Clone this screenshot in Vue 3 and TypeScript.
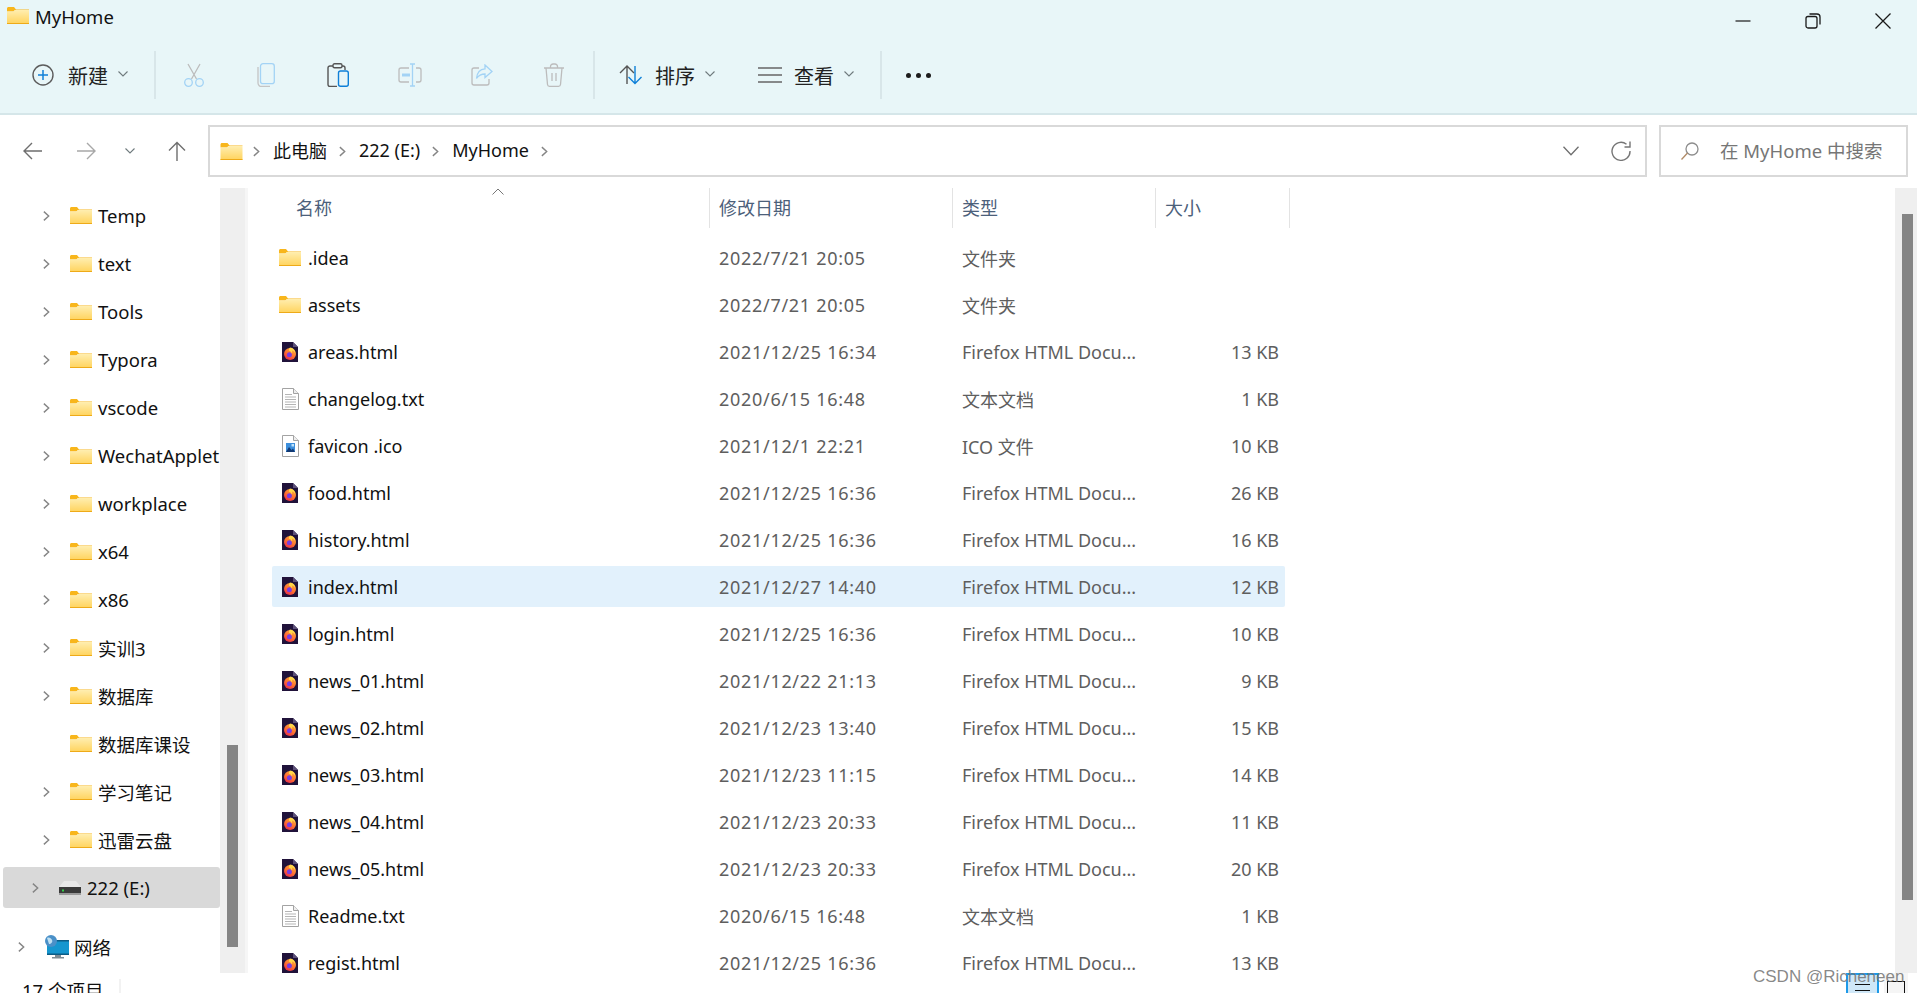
<script setup lang="ts">
interface TreeItem {
  name: string;
  noChevron?: boolean;
}

interface FileRow {
  name: string;
  date: string;
  type: string;
  size: string;
  icon: 'folder' | 'firefox' | 'text' | 'image';
  active?: boolean;
}

const FF = 'Firefox HTML Docu...';

const tree: TreeItem[] = [
  { name: 'Temp' },
  { name: 'text' },
  { name: 'Tools' },
  { name: 'Typora' },
  { name: 'vscode' },
  { name: 'WechatApplet' },
  { name: 'workplace' },
  { name: 'x64' },
  { name: 'x86' },
  { name: '实训3' },
  { name: '数据库' },
  { name: '数据库课设', noChevron: true },
  { name: '学习笔记' },
  { name: '迅雷云盘' },
];

const files: FileRow[] = [
  { name: '.idea', date: '2022/7/21 20:05', type: '文件夹', size: '', icon: 'folder' },
  { name: 'assets', date: '2022/7/21 20:05', type: '文件夹', size: '', icon: 'folder' },
  { name: 'areas.html', date: '2021/12/25 16:34', type: FF, size: '13 KB', icon: 'firefox' },
  { name: 'changelog.txt', date: '2020/6/15 16:48', type: '文本文档', size: '1 KB', icon: 'text' },
  { name: 'favicon .ico', date: '2021/12/1 22:21', type: 'ICO 文件', size: '10 KB', icon: 'image' },
  { name: 'food.html', date: '2021/12/25 16:36', type: FF, size: '26 KB', icon: 'firefox' },
  { name: 'history.html', date: '2021/12/25 16:36', type: FF, size: '16 KB', icon: 'firefox' },
  { name: 'index.html', date: '2021/12/27 14:40', type: FF, size: '12 KB', icon: 'firefox', active: true },
  { name: 'login.html', date: '2021/12/25 16:36', type: FF, size: '10 KB', icon: 'firefox' },
  { name: 'news_01.html', date: '2021/12/22 21:13', type: FF, size: '9 KB', icon: 'firefox' },
  { name: 'news_02.html', date: '2021/12/23 13:40', type: FF, size: '15 KB', icon: 'firefox' },
  { name: 'news_03.html', date: '2021/12/23 11:15', type: FF, size: '14 KB', icon: 'firefox' },
  { name: 'news_04.html', date: '2021/12/23 20:33', type: FF, size: '11 KB', icon: 'firefox' },
  { name: 'news_05.html', date: '2021/12/23 20:33', type: FF, size: '20 KB', icon: 'firefox' },
  { name: 'Readme.txt', date: '2020/6/15 16:48', type: '文本文档', size: '1 KB', icon: 'text' },
  { name: 'regist.html', date: '2021/12/25 16:36', type: FF, size: '13 KB', icon: 'firefox' },
];
</script>

<template>
  <div class="window">
    <svg class="defs" width="0" height="0" aria-hidden="true">
      <defs>
        <linearGradient id="folderFill" x1="0" y1="0" x2="0" y2="1">
          <stop offset="0" stop-color="#ffeeb0" />
          <stop offset="1" stop-color="#ffd35c" />
        </linearGradient>
        <linearGradient id="foxFill" x1="0.8" y1="0" x2="0.2" y2="1">
          <stop offset="0" stop-color="#ffb23a" />
          <stop offset="0.55" stop-color="#ff6f30" />
          <stop offset="1" stop-color="#e6254e" />
        </linearGradient>
        <symbol id="folder" viewBox="0 0 22 17">
          <path d="M0 1.5C0 .7.7 0 1.5 0H7l2 2.5h13V3H8L6.5 4.5H0z" fill="#f8b61c" />
          <path d="M0 4.5h6.5L8 3h14v14H0z" fill="url(#folderFill)" />
          <rect x="0" y="16" width="22" height="1" fill="#eeaa18" />
        </symbol>
        <symbol id="firefox" viewBox="0 0 16 20">
          <path d="M0 0h11l5 5v15H0z" fill="#20123a" />
          <path d="M11 0l5 5h-5z" fill="#5c5078" />
          <circle cx="8" cy="12" r="6" fill="url(#foxFill)" />
          <circle cx="7.4" cy="12.8" r="2.5" fill="#7b3ce0" />
          <path d="M8 5.5c3 .3 5.2 2.6 5.2 5.6-.8-1.6-2-2.5-3.6-2.7 1 .9.9 2.2.2 3-.2-1.4-1.4-2.5-2.8-2.7C6.8 7.8 7 6.5 8 5.5z" fill="#ffd84a" />
        </symbol>
        <symbol id="text" viewBox="0 0 17 22">
          <path d="M.5.5h11l5 5v16H.5z" fill="#fff" stroke="#a3a3a3" />
          <path d="M11.5.5v5h5" fill="#eee" stroke="#a3a3a3" />
          <path d="M3 6.5h7M3 9h11M3 11.5h11M3 14h11M3 16.5h11M3 19h11" stroke="#b5b5b5" />
        </symbol>
        <symbol id="image" viewBox="0 0 17 22">
          <path d="M.5.5h11l5 5v16H.5z" fill="#fff" stroke="#a3a3a3" />
          <path d="M11.5.5v5h5" fill="#eee" stroke="#a3a3a3" />
          <rect x="4" y="8" width="9" height="9" fill="#3d8fdc" />
          <path d="M4 17l3-5 2.5 3 1.5-1.5 2 3.5z" fill="#123a74" />
          <rect x="9.5" y="9" width="2.5" height="2.5" fill="#bfe3fb" />
        </symbol>
        <symbol id="chev" viewBox="0 0 8 12">
          <path d="M1 1l5.500 5L1 11" fill="none" stroke="#858585" stroke-width="1.600" />
        </symbol>
        <symbol id="down" viewBox="0 0 10 6">
          <path d="M.5.5L5 5 9.5.5" fill="none" stroke="#6f7a7d" stroke-width="1.100" />
        </symbol>
      </defs>
    </svg>

    <header class="chrome">
      <div class="titlebar">
        <svg class="title-icon" width="22" height="17"><use href="#folder" /></svg>
        <span class="title-text">MyHome</span>
        <div class="win-buttons">
          <svg width="16" height="16" viewBox="0 0 16 16"><path d="M.5 8h15" stroke="#1a1a1a" stroke-width="1.200" /></svg>
          <svg width="16" height="16" viewBox="0 0 16 16" fill="none" stroke="#1a1a1a" stroke-width="1.300">
            <rect x="1" y="3.5" width="11" height="11.5" rx="2" />
            <path d="M4.5 1h7.5a3 3 0 0 1 3 3v7.5" />
          </svg>
          <svg width="16" height="16" viewBox="0 0 16 16"><path d="M.5.5l15 15M15.5.5l-15 15" stroke="#1a1a1a" stroke-width="1.300" /></svg>
        </div>
      </div>
      <div class="toolbar">
        <div class="tool tool-new">
          <svg width="22" height="22" viewBox="0 0 22 22">
            <circle cx="11" cy="11" r="10" fill="none" stroke="#5c5c5c" stroke-width="1.400" />
            <path d="M11 6v10M6 11h10" stroke="#0f80d8" stroke-width="1.500" />
          </svg>
          <span class="tool-label">新建</span>
          <svg class="caret" width="10" height="6"><use href="#down" /></svg>
        </div>
        <span class="sep"></span>
        <div class="icon-tool">
          <svg width="22" height="24" viewBox="0 0 22 24" fill="none" stroke-width="1.300">
            <path d="M5 1l8.500 15M17 1L8.500 16" stroke="#bcbcbc" />
            <circle cx="5.5" cy="19.5" r="3.8" stroke="#a3d3f5" />
            <circle cx="16.5" cy="19.5" r="3.8" stroke="#a3d3f5" />
          </svg>
        </div>
        <div class="icon-tool">
          <svg width="18" height="24" viewBox="0 0 18 24" fill="none" stroke-width="1.300">
            <path d="M1 4v16a3.500 3.500 0 0 0 3.500 3.500H13" stroke="#c4c4c4" />
            <rect x="3.5" y=".7" width="13.8" height="20" rx="2.5" stroke="#a3d3f5" />
          </svg>
        </div>
        <div class="icon-tool">
          <svg width="22" height="24" viewBox="0 0 22 24" fill="none" stroke-width="1.400">
            <path d="M6 3H3a2 2 0 0 0-2 2v16.500a2 2 0 0 0 2 2h7M15 3h1a2 2 0 0 1 2 2v2" stroke="#555" />
            <rect x="6" y=".8" width="9" height="4" rx="1.5" stroke="#555" />
            <rect x="11.5" y="8" width="9.8" height="15.3" rx="2" stroke="#0f80d8" />
          </svg>
        </div>
        <div class="icon-tool">
          <svg width="24" height="24" viewBox="0 0 24 24" fill="none" stroke-width="1.300">
            <path d="M11 5H3a2 2 0 0 0-2 2v10a2 2 0 0 0 2 2h8M18 5h3a2 2 0 0 1 2 2v10a2 2 0 0 1-2 2h-3" stroke="#bcbcbc" />
            <path d="M14.500 1v22M12 1h5M12 23h5" stroke="#a3d3f5" />
            <rect x="4" y="10.5" width="8" height="3" fill="#a3d3f5" stroke="none" />
          </svg>
        </div>
        <div class="icon-tool">
          <svg width="22" height="22" viewBox="0 0 22 22" fill="none" stroke-width="1.300">
            <path d="M8 4H3a2 2 0 0 0-2 2v13a2 2 0 0 0 2 2h13a2 2 0 0 0 2-2v-4" stroke="#bcbcbc" />
            <path d="M14 1l7 6.500-7 6V10c-4 0-6.500 1.500-8.500 4.500C6 9 9 5 14 4.800z" stroke="#a3d3f5" />
          </svg>
        </div>
        <div class="icon-tool">
          <svg width="22" height="24" viewBox="0 0 22 24" fill="none" stroke="#bcbcbc" stroke-width="1.300">
            <path d="M1 5h20M7.500 5V3.500A2.500 2.500 0 0 1 10 1h2a2.500 2.500 0 0 1 2.500 2.500V5" />
            <path d="M3 5l1.500 16.500a2 2 0 0 0 2 1.800h9a2 2 0 0 0 2-1.800L19 5" />
            <path d="M9 10v8M13 10v8" />
          </svg>
        </div>
        <span class="sep sep-b"></span>
        <div class="tool tool-sort">
          <svg width="24" height="20" viewBox="0 0 24 20" fill="none" stroke-width="1.400">
            <path d="M8 19V1.500M1 8l7-7 7 7" stroke="#555" />
            <path d="M16 1v17.500M9.500 12l6.500 6.500 6.500-6.500" stroke="#0f80d8" />
          </svg>
          <span class="tool-label">排序</span>
          <svg class="caret" width="10" height="6"><use href="#down" /></svg>
        </div>
        <div class="tool tool-view">
          <svg width="24" height="18" viewBox="0 0 24 18" stroke="#666" stroke-width="1.500">
            <path d="M0 2h24M0 9h24M0 16h24" />
          </svg>
          <span class="tool-label">查看</span>
          <svg class="caret" width="10" height="6"><use href="#down" /></svg>
        </div>
        <span class="sep sep-c"></span>
        <div class="dots"><i></i><i></i><i></i></div>
      </div>
    </header>

    <div class="navrow">
      <div class="nav-buttons">
        <svg width="20" height="20" viewBox="0 0 20 20" fill="none" stroke="#6e6e6e" stroke-width="1.400"><path d="M19 10H1.500M9 2l-8 8 8 8" /></svg>
        <svg width="20" height="20" viewBox="0 0 20 20" fill="none" stroke="#a8a8a8" stroke-width="1.400"><path d="M1 10h17.500M11 2l8 8-8 8" /></svg>
        <svg width="10" height="6"><use href="#down" /></svg>
        <svg width="20" height="20" viewBox="0 0 20 20" fill="none" stroke="#6e6e6e" stroke-width="1.400"><path d="M10 20V1.500M2 9.500l8-8 8 8" /></svg>
      </div>
      <div class="address">
        <svg width="23" height="17"><use href="#folder" /></svg>
        <svg class="crumb-sep first" width="7" height="11"><use href="#chev" /></svg>
        <span class="crumb">此电脑</span>
        <svg class="crumb-sep" width="7" height="11"><use href="#chev" /></svg>
        <span class="crumb">222 (E:)</span>
        <svg class="crumb-sep" width="7" height="11"><use href="#chev" /></svg>
        <span class="crumb">MyHome</span>
        <svg class="crumb-sep" width="7" height="11"><use href="#chev" /></svg>
        <svg class="addr-down" width="16" height="10" viewBox="0 0 16 10" fill="none" stroke="#6e6e6e" stroke-width="1.300"><path d="M.5.8L8 8.800l7.500-8" /></svg>
        <svg class="refresh" width="20" height="20" viewBox="0 0 20 20" fill="none" stroke="#757575" stroke-width="1.400">
          <path d="M15.500 3.200A9 9 0 1 0 19 10" />
          <path d="M19 .5v5.500h-5.500" />
        </svg>
      </div>
      <div class="search">
        <svg width="18" height="18" viewBox="0 0 18 18" fill="none" stroke-width="1.300">
          <circle cx="11" cy="7" r="6" stroke="#8d8d8d" />
          <path d="M6.500 11L.5 17.500" stroke="#b08a66" />
        </svg>
        <span>在 MyHome 中搜索</span>
      </div>
    </div>

    <div class="body">
      <aside class="sidebar">
        <div class="tree">
          <div v-for="item in tree" :key="item.name" class="tree-row">
            <svg class="chev" :class="{ hidden: item.noChevron }" width="7" height="12"><use href="#chev" /></svg>
            <svg class="tree-icon" width="22" height="17"><use href="#folder" /></svg>
            <span>{{ item.name }}</span>
          </div>
          <div class="tree-row drive">
            <svg class="chev" width="7" height="12"><use href="#chev" /></svg>
            <svg class="tree-icon" width="22" height="14" viewBox="0 0 22 14">
              <path d="M5 0h12l5 6H0z" fill="#e8e8e8" />
              <rect y="6" width="22" height="7" fill="#3a3a3a" />
              <rect y="12" width="22" height="2" fill="#9a9a9a" />
              <rect x="3" y="8.5" width="2" height="2" fill="#35d04a" />
            </svg>
            <span>222 (E:)</span>
          </div>
          <div class="tree-row network">
            <svg class="chev" width="7" height="12"><use href="#chev" /></svg>
            <svg class="tree-icon" width="24" height="24" viewBox="0 0 24 24">
              <rect x="2" y="5" width="22" height="15" fill="#1596cf" />
              <rect x="2" y="5" width="22" height="1.5" fill="#0c5c86" />
              <rect x="2" y="18.5" width="22" height="1.5" fill="#0c5c86" />
              <path d="M10 20h6v2h3v1.500H7V22h3z" fill="#7f8c94" />
              <circle cx="6" cy="6" r="6" fill="#4a90c8" />
              <path d="M2 3c2-1 4 0 5 2s-1 4-3 4z" fill="#bfe0f2" />
            </svg>
            <span>网络</span>
          </div>
        </div>
        <div class="side-scroll"><div class="side-thumb"></div></div>
      </aside>

      <main class="content">
        <div class="list">
          <div class="list-head">
            <div class="head-cell head-name">
              名称
              <svg class="sort-caret" width="12" height="7" viewBox="0 0 12 7" fill="none" stroke="#777"><path d="M.5 6.500L6 1l5.500 5.500" /></svg>
            </div>
            <div class="head-cell">修改日期</div>
            <div class="head-cell">类型</div>
            <div class="head-cell">大小</div>
          </div>
          <div v-for="f in files" :key="f.name" class="file-row" :class="{ active: f.active }">
            <div class="file-name">
              <span class="file-icon">
                <svg v-if="f.icon === 'folder'" width="22" height="17"><use href="#folder" /></svg>
                <svg v-else-if="f.icon === 'firefox'" width="16" height="20"><use href="#firefox" /></svg>
                <svg v-else-if="f.icon === 'text'" width="17" height="22"><use href="#text" /></svg>
                <svg v-else width="17" height="22"><use href="#image" /></svg>
              </span>
              <span>{{ f.name }}</span>
            </div>
            <div class="file-date">{{ f.date }}</div>
            <div class="file-type">{{ f.type }}</div>
            <div class="file-size">{{ f.size }}</div>
          </div>
        </div>
        <div class="main-scroll"><div class="main-thumb"></div></div>
      </main>
    </div>

    <footer class="status">
      <span class="count">17 个项目</span>
      <div class="view-btns">
        <div class="view-btn on"><i></i><i></i></div>
        <div class="view-btn alt"><b></b></div>
      </div>
    </footer>

    <div class="watermark">CSDN @Richeneen</div>
  </div>
</template>

<style>
html,
body {
  margin: 0;
  background: #fff;
  overflow: hidden;
}
</style>

<style scoped>
.window {
  position: relative;
  width: 1917px;
  height: 993px;
  display: flex;
  flex-direction: column;
  overflow: hidden;
  background: #fff;
  color: #111;
  font-family: "Noto Sans", "Noto Sans CJK SC", sans-serif;
  font-size: 18px;
}

.defs {
  position: absolute;
}

svg {
  display: block;
  flex: none;
}

/* top band */
.chrome {
  height: 113px;
  flex: none;
  background: #e8f6f8;
  border-bottom: 2px solid #d5e6e9;
}

.titlebar {
  height: 51px;
  display: flex;
  align-items: flex-start;
}

.title-icon {
  margin: 7px 0 0 7px;
}

.title-text {
  margin: 4px 0 0 6px;
  font-size: 18.5px;
  line-height: 26px;
}

.win-buttons {
  margin-left: auto;
  margin-right: 26px;
  margin-top: 13px;
  display: flex;
  gap: 54px;
}

.toolbar {
  height: 48px;
  display: flex;
  align-items: center;
  padding-left: 32px;
}

.tool {
  display: flex;
  align-items: center;
}

.tool-label {
  font-size: 20px;
  line-height: 26px;
  color: #222;
  margin-top: 4px;
}

.tool-new {
  width: 122px;
}

.tool-new .tool-label {
  margin-left: 14px;
}

.caret {
  margin-left: 10px;
  margin-top: -2px;
}

.sep {
  width: 2px;
  height: 48px;
  background: #d8e6e9;
  flex: none;
}

.icon-tool {
  width: 72px;
  display: flex;
  justify-content: center;
}

.toolbar .sep:first-of-type + .icon-tool {
  margin-left: 2px;
}

.sep-b {
  margin-left: 3px;
  margin-right: 24px;
}

.tool-sort svg:first-child {
  margin-right: 12px;
}

.tool-view {
  margin-left: 43px;
}

.tool-view svg:first-child {
  margin-right: 12px;
}

.sep-c {
  margin-left: 26px;
  margin-right: 24px;
}

.dots {
  display: flex;
  gap: 5px;
}

.dots i {
  width: 5px;
  height: 5px;
  border-radius: 50%;
  background: #1c1c1c;
}

/* address row */
.navrow {
  height: 73px;
  flex: none;
  box-sizing: border-box;
  padding-top: 10px;
  display: flex;
  align-items: flex-start;
}

.nav-buttons {
  width: 208px;
  flex: none;
  height: 52px;
  display: flex;
  align-items: center;
  padding-left: 23px;
  box-sizing: border-box;
}

.nav-buttons svg:nth-child(2) {
  margin-left: 33px;
}

.nav-buttons svg:nth-child(3) {
  margin-left: 29px;
}

.nav-buttons svg:nth-child(4) {
  margin-left: 32px;
}

.address {
  width: 1439px;
  height: 52px;
  box-sizing: border-box;
  border: 2px solid #d9d9d9;
  display: flex;
  align-items: center;
  padding-left: 10px;
  font-size: 18px;
}

.crumb {
  margin-bottom: 2px;
}

.crumb-sep {
  margin: 1px 13px 0 12px;
}

.crumb-sep.first {
  margin-left: 10px;
}

.addr-down {
  margin-left: auto;
}

.refresh {
  margin-left: 32px;
  margin-right: 14px;
}

.search {
  width: 249px;
  height: 52px;
  box-sizing: border-box;
  margin-left: 12px;
  border: 2px solid #d9d9d9;
  display: flex;
  align-items: center;
  padding-left: 20px;
  font-size: 18.5px;
  color: #767676;
}

.search span {
  margin-left: 21px;
  margin-bottom: 2px;
  white-space: nowrap;
}

/* main area */
.body {
  flex: 1;
  min-height: 0;
  display: flex;
}

.sidebar {
  width: 245px;
  flex: none;
  display: flex;
  border-right: 3px solid #f6f6f6;
}

.tree {
  width: 217px;
  margin-left: 3px;
  padding-top: 7px;
  overflow: hidden;
  white-space: nowrap;
}

.tree-row {
  height: 41px;
  margin-bottom: 7px;
  display: flex;
  align-items: center;
  padding-left: 40px;
  font-size: 18.5px;
}

.chev.hidden {
  visibility: hidden;
}

.tree-icon {
  margin-left: 20px;
  margin-right: 6px;
}

.tree-row.drive {
  padding-left: 29px;
  background: #d9d9d9;
  border-radius: 3px;
}

.tree-row.network {
  margin-top: 18px;
  padding-left: 15px;
}

.tree-row.network .tree-icon {
  margin-right: 5px;
}

.side-scroll {
  width: 25px;
  flex: none;
  background: #efefef;
  padding: 557px 7px 0;
  box-sizing: border-box;
}

.side-thumb {
  width: 11px;
  height: 202px;
  background: #858585;
}

.content {
  flex: 1;
  min-width: 0;
  display: flex;
}

.list {
  flex: 1;
  padding-left: 24px;
}

.list-head {
  width: 1018px;
  height: 40px;
  margin-bottom: 9px;
  display: grid;
  grid-template-columns: 438px 243px 203px 134px;
}

.head-cell {
  position: relative;
  display: flex;
  align-items: center;
  box-sizing: border-box;
  padding: 0 0 2px 9px;
  font-size: 18px;
  color: #4c607a;
  border-right: 1px solid #e3e3e3;
}

.head-name {
  padding-left: 24px;
}

.sort-caret {
  position: absolute;
  left: 220px;
  top: 0;
}

.file-row {
  width: 1013px;
  height: 41px;
  margin-bottom: 6px;
  display: grid;
  grid-template-columns: 437px 243px 203px 130px;
  align-items: center;
  border-radius: 2px;
}

.file-row.active {
  background: #e2f1fc;
}

.file-name {
  display: flex;
  align-items: center;
  padding-left: 7px;
}

.file-icon {
  width: 22px;
  height: 22px;
  margin-right: 7px;
  display: flex;
  align-items: center;
  justify-content: center;
}

.file-date {
  padding-left: 10px;
  color: #5e5e5e;
  letter-spacing: 0.7px;
}

.file-type {
  padding-left: 10px;
  color: #5e5e5e;
}

.file-size {
  text-align: right;
  padding-right: 6px;
  color: #5e5e5e;
}

.main-scroll {
  width: 22px;
  flex: none;
  background: #efefef;
  padding: 26px 4px 0 7px;
  box-sizing: border-box;
}

.main-thumb {
  width: 11px;
  height: 686px;
  background: #858585;
}

/* status bar */
.status {
  height: 20px;
  flex: none;
  display: flex;
  align-items: flex-start;
  overflow: hidden;
}

.count {
  margin: 6px 0 0 22px;
  width: 97px;
  font-size: 18.5px;
  line-height: 24px;
  border-right: 2px solid #f2f2f2;
}

.view-btns {
  margin-left: auto;
  margin-right: 9px;
  display: flex;
  gap: 5px;
}

.view-btn {
  width: 33px;
  height: 30px;
  box-sizing: border-box;
}

.view-btn.on {
  border: 2px solid #1e9ae8;
  background: #cfe7f7;
  padding: 9px 7px 0;
}

.view-btn.on i {
  display: block;
  height: 1px;
  background: #111;
  margin-bottom: 5px;
}

.view-btn.alt {
  width: 24px;
  background: #f5f5f5;
  padding: 8px 3px 0;
}

.view-btn.alt b {
  display: block;
  height: 24px;
  border: 1.5px solid #111;
  box-sizing: border-box;
}

.watermark {
  position: absolute;
  left: 1753px;
  top: 967px;
  font-family: "Liberation Sans", sans-serif;
  font-size: 17px;
  line-height: 20px;
  color: rgba(115, 115, 115, 0.85);
  white-space: nowrap;
}
</style>
